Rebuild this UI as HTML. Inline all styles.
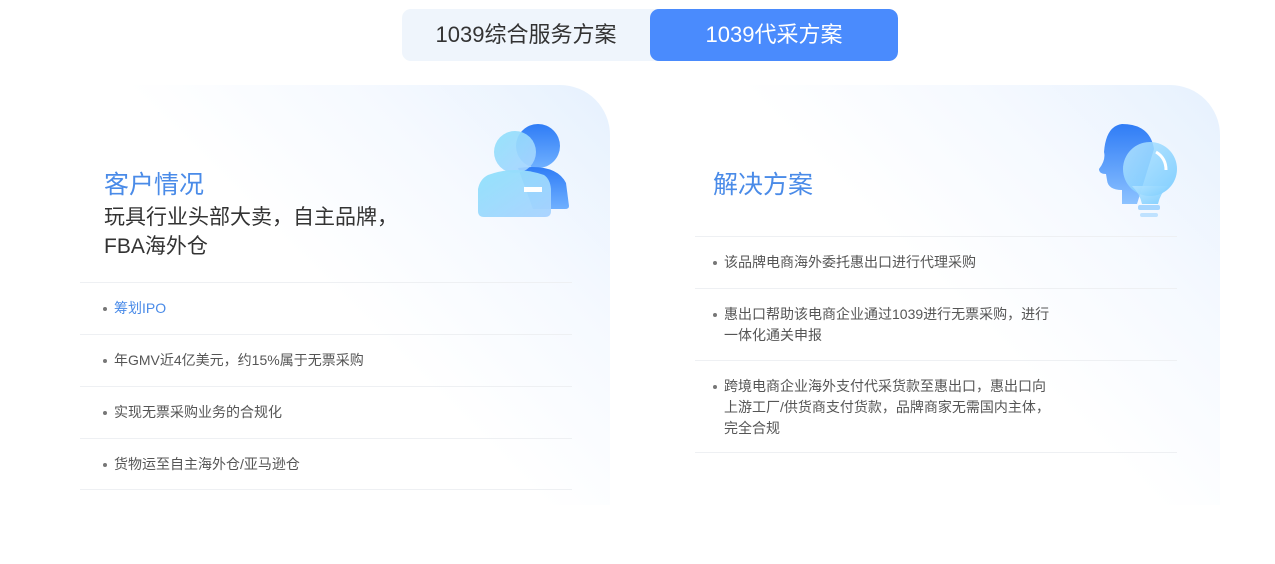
<!DOCTYPE html>
<html><head><meta charset="utf-8"><style>
*{margin:0;padding:0;box-sizing:border-box}
body{width:1275px;height:564px;background:#fff;font-family:"Liberation Sans","Noto Sans CJK SC",sans-serif;position:relative;overflow:hidden}
.tabs{position:absolute;left:402px;top:9px;width:496px;height:52px;display:flex;border-radius:9px;overflow:hidden;background:#eff5fc}
.tab{width:248px;height:52px;line-height:52px;text-align:center;font-size:22px;color:#333}
.tab.on{background:#4a8bfd;color:#fff;border-radius:9px}
.card{position:absolute;top:85px;height:420px;border-top-right-radius:50px;background:linear-gradient(225deg,#e6f1fe 0%,#f5f9ff 25%,#fff 50%,#fff 100%)}
.c1{left:60px;width:550px}
.c2{left:680px;width:540px}
h2{position:absolute;font-size:25px;font-weight:normal;color:#4a8be8}
.sub{position:absolute;left:104px;top:203px;font-size:21px;line-height:29px;color:#333}
.row{position:absolute;border-top:1px solid #eef0f3;font-size:14px;color:#555;line-height:21px}
.row span{position:absolute}
.dot{position:absolute;width:4px;height:4px;border-radius:50%;background:#777}
</style></head><body>
<div class="tabs"><div class="tab">1039综合服务方案</div><div class="tab on">1039代采方案</div></div>
<div class="card c1"></div>
<div class="card c2"></div>

<svg style="position:absolute;left:478px;top:123px" width="94" height="96" viewBox="0 0 94 96">
<defs><linearGradient id="g1" x1="0" y1="0" x2="0" y2="1"><stop offset="0" stop-color="#2f7cf6"/><stop offset="1" stop-color="#6fb0ff"/></linearGradient>
<linearGradient id="g2" x1="0" y1="0" x2="1" y2="1"><stop offset="0" stop-color="#8fe1fb"/><stop offset="1" stop-color="#a8d2ff"/></linearGradient></defs>
<circle cx="60" cy="23" r="22" fill="url(#g1)"/>
<path d="M40 45 Q78 40 88 60 L91 83 Q91 86 87 86 L55 86 Z" fill="url(#g1)"/>
<circle cx="37" cy="29" r="21" fill="url(#g2)" opacity=".92"/>
<path d="M10 52 Q37 42 66 52 Q72 56 73 66 L73 88 Q73 94 67 94 L6 94 Q0 94 0 88 L0 66 Q2 56 10 52Z" fill="url(#g2)" opacity=".95"/>
<rect x="46" y="64" width="18" height="5" fill="#fff"/>
</svg>

<svg style="position:absolute;left:1092px;top:124px" width="90" height="94" viewBox="0 0 90 94">
<defs><linearGradient id="g3" x1="0" y1="0" x2="0" y2="1"><stop offset="0" stop-color="#2f7cf6"/><stop offset="1" stop-color="#8cc2ff"/></linearGradient>
<linearGradient id="g4" x1="0" y1="0" x2="1" y2="1"><stop offset="0" stop-color="#b5e4ff"/><stop offset="1" stop-color="#6ec8ff"/></linearGradient></defs>
<path d="M30 0 Q58 0 62 25 L45 80 L30 80 L30 66 Q16 66 15 56 L14 50 Q7 50 7 45 Q14 36 12 28 Q14 2 30 0Z" fill="url(#g3)"/>
<circle cx="58" cy="45" r="27" fill="url(#g4)" opacity=".85"/>
<path d="M40 62 Q48 70 50 80 L66 80 Q68 70 76 62" fill="url(#g4)" opacity=".85"/>
<path d="M64 28 Q74 34 74 46" stroke="#fff" stroke-width="3" fill="none"/>
<rect x="46" y="81" width="22" height="5" rx="2" fill="#a6d6ff"/>
<rect x="48" y="89" width="18" height="4" rx="2" fill="#bfe2ff"/>
</svg>

<h2 style="left:104px;top:165px">客户情况</h2>
<div class="sub">玩具行业头部大卖，自主品牌，<br>FBA海外仓</div>
<div class="row" style="left:80px;top:282px;width:492px;height:52px"><div class="dot" style="left:23px;top:24px"></div><span style="left:34px;top:15px;color:#4a8be8">筹划IPO</span></div>
<div class="row" style="left:80px;top:334px;width:492px;height:52px"><div class="dot" style="left:23px;top:24px"></div><span style="left:34px;top:15px">年GMV近4亿美元，约15%属于无票采购</span></div>
<div class="row" style="left:80px;top:386px;width:492px;height:52px"><div class="dot" style="left:23px;top:24px"></div><span style="left:34px;top:15px">实现无票采购业务的合规化</span></div>
<div class="row" style="left:80px;top:438px;width:492px;height:52px;border-bottom:1px solid #eef0f3"><div class="dot" style="left:23px;top:24px"></div><span style="left:34px;top:15px">货物运至自主海外仓/亚马逊仓</span></div>

<h2 style="left:713px;top:165px">解决方案</h2>
<div class="row" style="left:695px;top:236px;width:482px;height:52px"><div class="dot" style="left:18px;top:24px"></div><span style="left:29px;top:15px">该品牌电商海外委托惠出口进行代理采购</span></div>
<div class="row" style="left:695px;top:288px;width:482px;height:72px"><div class="dot" style="left:18px;top:24px"></div><span style="left:29px;top:15px">惠出口帮助该电商企业通过1039进行无票采购，进行<br>一体化通关申报</span></div>
<div class="row" style="left:695px;top:360px;width:482px;height:93px;border-bottom:1px solid #eef0f3"><div class="dot" style="left:18px;top:24px"></div><span style="left:29px;top:15px">跨境电商企业海外支付代采货款至惠出口，惠出口向<br>上游工厂/供货商支付货款，品牌商家无需国内主体，<br>完全合规</span></div>
</body></html>
